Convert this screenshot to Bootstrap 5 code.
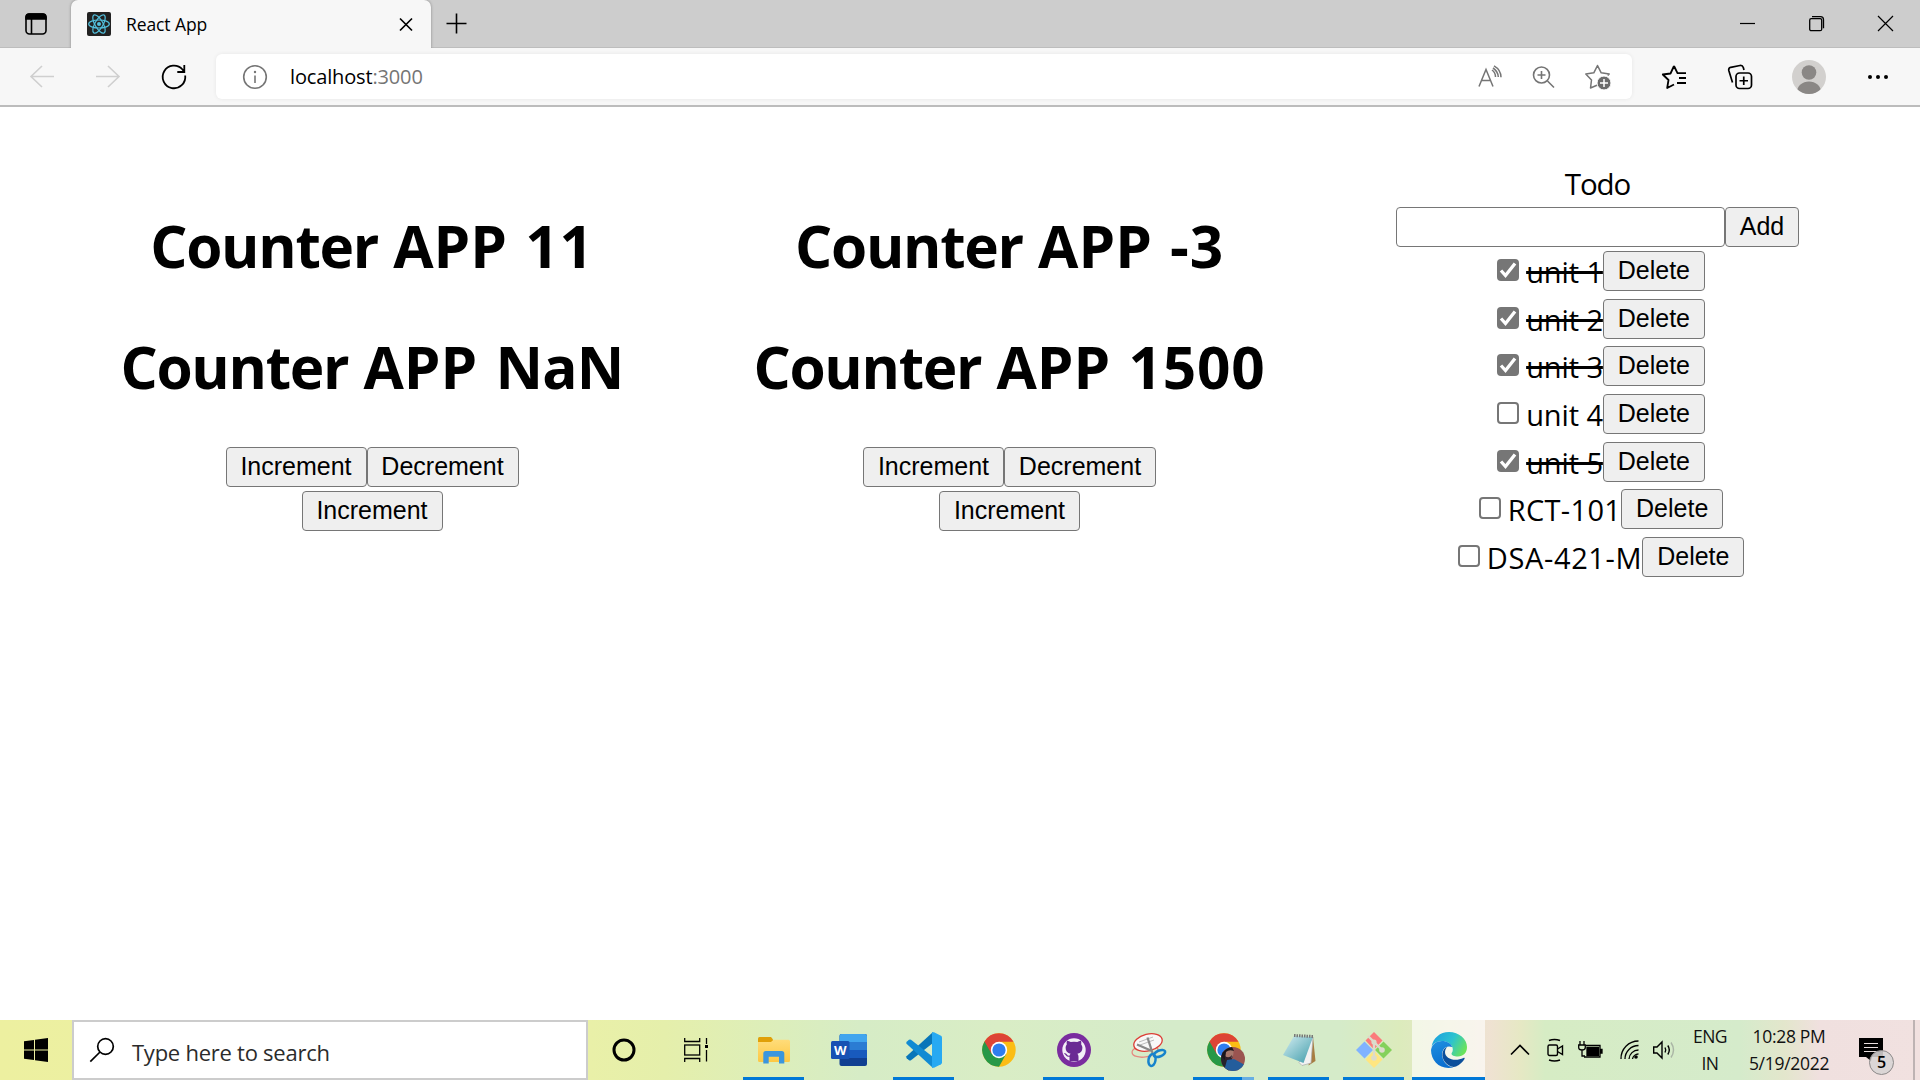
<!DOCTYPE html>
<html lang="en">
<head>
<meta charset="utf-8">
<meta name="viewport" content="width=device-width, initial-scale=1">
<title>React App</title>
<link href="https://cdn.jsdelivr.net/npm/bootstrap@5.3.0/dist/css/bootstrap.min.css" rel="stylesheet">
<style>
body{font-family:"Open Sans","Noto Sans",sans-serif;color:#000;height:1080px;overflow:hidden;background:#fff}
svg{display:block;flex:none;overflow:visible}
svg:not([stroke]){stroke:currentColor;fill:none}
.tabstrip{height:48px;background:#cdcdcd;box-shadow:inset 0 -1px #bdbdbd}
.strip-cell{width:71px}
.browser-tab{width:360px;height:48px;background:#f7f7f7;border-radius:7px 7px 0 0;padding:0 18px 0 16px;box-shadow:0 0 3px rgba(0,0,0,.35);clip-path:inset(0 -4px 0 -4px)}
.tab-title{font-size:17.5px;line-height:24px;letter-spacing:-.1px;margin-left:15px}
.win-cell{width:69px;height:47px}
.toolbar{height:59px;background:#f7f7f7;border-bottom:2px solid #bcbcbc;padding:0 9px}
.tool{width:66px;height:57px}
.tool-off{color:#cfcfcf}
.tool-wide{width:72px}
.address{height:45px;width:1416px;margin:0 9px;background:#fff;border-radius:6px;padding-right:7px;box-shadow:0 0 4px rgba(0,0,0,.07);color:#757575}
.info-cell{width:74px;padding-left:4px}
.url{font-size:20px;line-height:28px;letter-spacing:-.15px}
.url b{font-weight:400;color:#000}
.addr-tool{width:54px}
.viewport-area{height:913px}
.col-a{width:744px}.col-b{width:531px}.col-c{width:645px}
.counter-title{font-size:58.5px;line-height:80px;font-weight:700;margin:0 0 41px;white-space:nowrap}
.label-word{letter-spacing:-1.3px}
.count{margin-left:3px;letter-spacing:.8px}
.count-nan{margin-left:3px;letter-spacing:-.8px}
.col-a,.col-b{padding-top:98px}
.ui-btn{font:25px/36px "Liberation Sans",sans-serif;height:40px;border:1.5px solid #767676;border-radius:4px;background:#efefef;color:#000;padding:0 0 2px;text-align:center}
.w-inc{width:141px}.w-dec{width:152px}.w-del{width:102px}.w-add{width:74px}
.btn-line{margin-bottom:4px}
.col-c{padding-top:56px}
.todo-name{font-size:29.500px;line-height:42px;letter-spacing:-1.1px;margin-bottom:2px}
.todo-input{width:329px;height:40px;border:1.5px solid #767676;border-radius:4px;background:#fff}
.todo-row{height:47.67px}
.tick{width:22px;height:22px;border:2px solid #767676;border-radius:4px;background:#fff;margin:8px 7px 0 7px;flex:none}
.tick-on{background:#767676;border:0}
.item{font-size:29px;line-height:42px;white-space:nowrap;letter-spacing:-.1px}
.item-course{letter-spacing:.3px}
.item-long{letter-spacing:.65px}
.done{text-decoration:line-through;text-decoration-thickness:3px}
.taskbar{height:60px;background:linear-gradient(90deg,#edf0a0 0,#e9f0a8 590px,#e5efab 665px,#dceebb 780px,#d6ecc6 860px,#d9edc5 1000px,#d5ebca 1170px,#d5ebc9 1340px,#dcebbc 1400px,#efe2d2 1490px,#e6e8c4 1520px,#d6ecc4 1545px,#d5ebcb 1740px,#e3e6cc 1785px,#f0e0df 1820px,#f1e1e0 1920px)}
.start{width:72px}
.search{width:516px;height:60px;border:2px solid #ccc;background:#fff;padding-left:16px}
.search span{font-size:22px;line-height:30px;color:#2b2b2b;margin-left:18px;letter-spacing:-.25px;padding-top:3px}
.task{width:73px;height:60px;margin-right:2px}
.task-sys{width:72px;height:60px}
.run::after{content:"";position:absolute;bottom:0;left:6px;right:6px;height:3px;background:#0078d7}
.multi::after{background:linear-gradient(90deg,#0078d7 49px,#67aee3 49px)}
.active-app{background:rgba(255,255,255,.62)}
.active-app::after{left:0;right:0}
.apps{margin-left:5px}
.tray{gap:0 14px}
.tray-icons{margin-left:26px}
.tray-text{font-size:17.500px;line-height:27px;color:#111;text-align:center;white-space:nowrap;letter-spacing:-.5px}
.lang{width:42px}
.clock{width:88px;letter-spacing:-.3px}
.notices{margin-left:12px}
.badge5{position:absolute;left:10px;top:12px;width:25px;height:25px;border-radius:50%;background:rgba(215,212,212,.88);border:1px solid #8c8989;font-size:16px;line-height:23px;font-weight:600;text-align:center}
.peek{width:7px;height:60px;border-left:2px solid #bdb3b3}
</style>
<script src="https://cdn.jsdelivr.net/npm/bootstrap@5.3.0/dist/js/bootstrap.bundle.min.js"></script>
</head>
<body class="d-flex flex-column">
<header>
<div class="tabstrip d-flex">
  <div class="strip-cell d-flex align-items-center justify-content-center">
    <svg width="22" height="22" stroke-width="1.6"><rect x="1" y="1" width="20" height="20" rx="3.5"/><path d="M1 6V4a3 3 0 0 1 3-3h14a3 3 0 0 1 3 3v2z" fill="#000"/><path d="M6.500 6v15"/></svg>
  </div>
  <div class="browser-tab d-flex align-items-center">
    <svg width="24" height="24" viewBox="0 0 24 24" fill="none" stroke="#53c1de" stroke-width="1.200"><rect width="24" height="24" rx="2" fill="#222" stroke="none"/><ellipse cx="12" cy="12" rx="10.300" ry="4"/><ellipse cx="12" cy="12" rx="10.300" ry="4" transform="rotate(60 12 12)"/><ellipse cx="12" cy="12" rx="10.300" ry="4" transform="rotate(120 12 12)"/><circle cx="12" cy="12" r="2" fill="#53c1de" stroke="none"/></svg>
    <span class="tab-title flex-grow-1">React App</span>
    <svg width="14" height="14" stroke-width="1.7"><path d="M1 1.500l12 12M13 1.500l-12 12"/></svg>
  </div>
  <div class="d-flex align-items-center ps-3"><svg width="20" height="20" stroke-width="1.6"><path d="M9.500 -.5v20M-.5 9.500h20"/></svg></div>
  <div class="d-flex ms-auto">
    <div class="win-cell d-flex align-items-center justify-content-center"><svg width="15" height="15" stroke-width="1.200"><path d="M0 7.500h15"/></svg></div>
    <div class="win-cell d-flex align-items-center justify-content-center"><svg width="15" height="15" stroke-width="1.3"><rect x=".7" y="2.700" width="12" height="12" rx="1.500"/><path d="M3 .7h8.500a3 3 0 0 1 3 3v8.500"/></svg></div>
    <div class="win-cell d-flex align-items-center justify-content-center"><svg width="15" height="15" stroke-width="1.200"><path d="M0 0l15 15M15 0l-15 15"/></svg></div>
  </div>
</div>
<div class="toolbar d-flex align-items-center">
  <div class="tool tool-off d-flex align-items-center justify-content-center"><svg width="24" height="22" stroke-width="1.600"><path d="M24 10.500H1M12 0L1 10.500 12 21"/></svg></div>
  <div class="tool tool-off d-flex align-items-center justify-content-center"><svg width="24" height="22" stroke-width="1.600"><path d="M0 10.500h23M12 0l11 10.500L12 21"/></svg></div>
  <div class="tool d-flex align-items-center justify-content-center"><svg width="24" height="24" stroke-width="1.800"><path d="M23.200 10.500A11.300 11.300 0 1 1 20.500 4.500l1.500 2M22.300 0v7h-7"/></svg></div>
  <div class="address d-flex align-items-center">
    <div class="info-cell d-flex align-items-center justify-content-center"><svg width="24" height="24" stroke-width="1.600"><circle cx="12" cy="12" r="11.300"/><path d="M12 10.500v7.500"/><circle cx="12" cy="7" r="1.200" fill="currentColor" stroke="none"/></svg></div>
    <div class="url flex-grow-1"><b>localhost</b>:3000</div>
    <div class="addr-tool d-flex justify-content-center"><svg width="24" height="24" stroke-width="1.500"><path d="M1 21.500L8 4.500l7 17M3.500 15.500h9M14 5q3.500 2.500 3.500 7M16 .8q7 4 7 11.500M15 3q5 3.300 5.300 9"/></svg></div>
    <div class="addr-tool d-flex justify-content-center"><svg width="22" height="22" stroke-width="1.600"><circle cx="8.500" cy="9" r="8"/><path d="M14.500 15l6.500 6.500M8.500 5v8M4.500 9h8"/></svg></div>
    <div class="addr-tool d-flex justify-content-center"><svg width="26" height="26" stroke-width="1.500"><path d="M12.500 21L5.500 24l1-8L.8 10l8-1.200L12.500 1.500l3.700 7.300 8 1.200-1.500 1.500" stroke-linejoin="round"/><circle cx="19" cy="19" r="7" fill="#6b6b6b" stroke="#fff" stroke-width="1"/><path d="M19 15v8M15 19h8" stroke="#fff"/></svg></div>
  </div>
  <div class="tool d-flex align-items-center justify-content-center"><svg width="24" height="24" stroke-width="1.800" stroke-linejoin="round"><path d="M12 1L8.500 8.500.8 9.500l5.700 5.500-1.300 8L12 19.500M12 1l3.500 7.200H24M17 13h7M15 18h9"/></svg></div>
  <div class="tool d-flex align-items-center justify-content-center"><svg width="24" height="24" stroke-width="1.700" stroke-linejoin="round"><rect x="8" y="8" width="15.500" height="15.500" rx="3.500"/><path d="M15.750 11.500v8.500M11.500 15.750h8.500M4.500 17.500L.8 5.500Q.3 3 2.700 2.300L12 .5q2.500-.3 3.300 2l.7 2.500"/></svg></div>
  <div class="tool tool-wide d-flex align-items-center justify-content-center"><svg width="34" height="34" stroke="none"><defs><clipPath id="face"><circle cx="17" cy="17" r="17"/></clipPath></defs><g clip-path="url(#face)"><rect width="34" height="34" fill="#d2d0ce"/><circle cx="17" cy="12.500" r="7.300" fill="#8a8785"/><ellipse cx="17" cy="32" rx="12" ry="10.500" fill="#8a8785"/></g></svg></div>
  <div class="tool d-flex align-items-center justify-content-center"><svg width="20" height="4" fill="#000" stroke="none"><circle cx="2" cy="2" r="2"/><circle cx="10" cy="2" r="2"/><circle cx="18" cy="2" r="2"/></svg></div>
</div>
</header>

<main class="viewport-area d-flex">
  <section class="col-a d-flex flex-column align-items-center">
    <h1 class="counter-title"><span class="label-word">Counter</span> APP <span class="count">11</span></h1>
    <h1 class="counter-title"><span class="label-word">Counter</span> APP <span class="count-nan">NaN</span></h1>
    <div class="btn-line d-flex"><button class="ui-btn w-inc">Increment</button><button class="ui-btn w-dec">Decrement</button></div>
    <button class="ui-btn w-inc">Increment</button>
  </section>
  <section class="col-b d-flex flex-column align-items-center">
    <h1 class="counter-title"><span class="label-word">Counter</span> APP <span class="count">-3</span></h1>
    <h1 class="counter-title"><span class="label-word">Counter</span> APP <span class="count">1500</span></h1>
    <div class="btn-line d-flex"><button class="ui-btn w-inc">Increment</button><button class="ui-btn w-dec">Decrement</button></div>
    <button class="ui-btn w-inc">Increment</button>
  </section>
  <section class="col-c d-flex flex-column align-items-center">
    <div class="todo-name">Todo</div>
    <div class="btn-line d-flex"><input class="todo-input" type="text" aria-label="Todo"><button class="ui-btn w-add">Add</button></div>
    <div class="todo-row d-flex"><span class="tick tick-on"><svg width="22" height="22" fill="none" stroke="#fff" stroke-width="3.300"><path d="M4 11.500l4.500 5L18 4.500"/></svg></span><span class="item done">unit 1</span><button class="ui-btn w-del">Delete</button></div>
    <div class="todo-row d-flex"><span class="tick tick-on"><svg width="22" height="22" fill="none" stroke="#fff" stroke-width="3.300"><path d="M4 11.500l4.500 5L18 4.500"/></svg></span><span class="item done">unit 2</span><button class="ui-btn w-del">Delete</button></div>
    <div class="todo-row d-flex"><span class="tick tick-on"><svg width="22" height="22" fill="none" stroke="#fff" stroke-width="3.300"><path d="M4 11.500l4.500 5L18 4.500"/></svg></span><span class="item done">unit 3</span><button class="ui-btn w-del">Delete</button></div>
    <div class="todo-row d-flex"><span class="tick"></span><span class="item">unit 4</span><button class="ui-btn w-del">Delete</button></div>
    <div class="todo-row d-flex"><span class="tick tick-on"><svg width="22" height="22" fill="none" stroke="#fff" stroke-width="3.300"><path d="M4 11.500l4.500 5L18 4.500"/></svg></span><span class="item done">unit 5</span><button class="ui-btn w-del">Delete</button></div>
    <div class="todo-row d-flex"><span class="tick"></span><span class="item item-course">RCT-101</span><button class="ui-btn w-del">Delete</button></div>
    <div class="todo-row d-flex"><span class="tick"></span><span class="item item-long">DSA-421-M</span><button class="ui-btn w-del">Delete</button></div>
  </section>
</main>

<footer class="taskbar d-flex">
  <div class="start d-flex align-items-center justify-content-center"><svg width="24" height="24" fill="#000" stroke="none"><path d="M0 3.300L10 2v9.500H0zM11 1.800L24 0v11.500H11zM0 12.500h10V22L0 20.700zM11 12.500h13V24l-13-1.800z"/></svg></div>
  <div class="search d-flex align-items-center"><svg width="24" height="24" stroke-width="1.700"><circle cx="15.500" cy="8.500" r="7.800"/><path d="M10 14L.3 23.700"/></svg><span>Type here to search</span></div>
  <div class="task-sys d-flex align-items-center justify-content-center"><svg width="24" height="24" stroke-width="3"><circle cx="12" cy="12" r="10"/></svg></div>
  <div class="task-sys d-flex align-items-center justify-content-center"><svg width="24" height="24" stroke-width="1.300"><path d="M.7 0v3.500h15V0M.7 24v-3.500h15V24M22.500 0v6M22.500 12v11.500"/><rect x=".7" y="7" width="15" height="10"/><rect x="21" y="7" width="3" height="3" fill="#000" stroke="none"/></svg></div>
  <div class="apps d-flex">
    <div class="task run position-relative d-flex align-items-center justify-content-center"><svg width="32" height="27" stroke="none"><defs><linearGradient id="fold" x2="0" y2="1"><stop stop-color="#ffdc7a"/><stop offset="1" stop-color="#fdc843"/></linearGradient></defs><path d="M0 1.500Q0 0 1.500 0H13l2 2.500V6H0z" fill="#e0a008"/><path d="M0 5h13l2.500-2.300H30.500q1.500 0 1.500 1.500V23.500q0 1.500-1.500 1.500h-29Q0 25 0 23.500z" fill="url(#fold)"/><path d="M5.300 26.500V16.500q0-2.500 2.500-2.500h16q2.500 0 2.500 2.500v10H21v-6.700H10.700v6.700z" fill="#3b96dd"/></svg></div>
    <div class="task position-relative d-flex align-items-center justify-content-center"><svg width="36" height="32" stroke="none"><rect x="8.500" width="27.500" height="32" rx="2" fill="#103f91"/><path d="M8.500 8V2q0-2 2-2H34q2 0 2 2v6z" fill="#41a5ee"/><path d="M8.500 8H36v8H8.500z" fill="#2b7cd3"/><path d="M8.500 16H36v8H8.500z" fill="#185abd"/><rect y="7" width="18.500" height="18" rx="1.500" fill="#1751b3"/><text x="9.200" y="20.700" font-family="Open Sans" font-size="13" font-weight="700" fill="#fff" text-anchor="middle">W</text></svg></div>
    <div class="task run position-relative d-flex align-items-center justify-content-center"><svg width="36" height="36" viewBox="0 0 36 36" stroke="none"><path d="M27 0L.5 24.300q-.6 1 .2 2l2.300 2q1 .6 2 0L27 11z" fill="#0876b9"/><path d="M27 36L.5 11.700q-.6-1 .2-2l2.300-2q1-.6 2 0L27 25z" fill="#118bd3"/><path d="M26 .6Q26.500 0 28 .3L35 3.700q1 .5 1 1.700v25.200q0 1.200-1 1.700l-7 3.400Q26.500 36 26 35.400z" fill="#27a9f2"/></svg></div>
    <div class="task position-relative d-flex align-items-center justify-content-center"><svg width="34" height="34" viewBox="0 0 34 34" stroke="none"><g id="chrome"><circle cx="17" cy="17" r="16.700" fill="#fbbd14"/><path d="M17 33.700A16.700 16.700 0 0 1 2.500 8.600L10 13l14 8.200z" fill="#279847"/><path d="M2.500 8.600A16.700 16.700 0 0 1 31.500 8.800H17L9.700 21z" fill="#dd4436"/><circle cx="17" cy="17" r="8.200" fill="#fff"/><circle cx="17" cy="17" r="6.600" fill="#2f7def"/></g></svg></div>
    <div class="task run position-relative d-flex align-items-center justify-content-center"><svg width="34" height="34" viewBox="0 0 34 34" stroke="none"><circle cx="17" cy="17" r="17" fill="#7a2c9f"/><circle cx="17" cy="17" r="11.700" fill="#f3eef7"/><path d="M12.500 28.200v-4.500q-2.500.4-3.500-1.200t-2.300-2q2-.8 3.200 1t2.700 1.100q.3-1.300 1-1.800-5-1-5-6 0-2 1.200-3.400-.5-1.800.3-3.600 2 .1 3.600 1.300 3.300-.8 6.600 0 1.600-1.200 3.600-1.300.7 1.800.3 3.600 1.200 1.400 1.200 3.400 0 5-5 6 1.100 1 1.100 3v4.400z" fill="#6a2a94"/></svg></div>
    <div class="task position-relative d-flex align-items-center justify-content-center"><svg width="34" height="34" fill="none" stroke="#888" stroke-width="1.300"><ellipse cx="13" cy="18" rx="13" ry="6" stroke="#e58a80" transform="rotate(-8 13 18)"/><ellipse cx="16" cy="9.500" rx="14.500" ry="8.300" stroke="#dc3c35" fill="#f8f8f8" transform="rotate(-14 16 9.500)"/><path d="M7 9l14-5M8 12l14-5" stroke="#bbb" stroke-width="1"/><path d="M5 11.500L20 18M15.500 4.500L20.500 20" stroke-width="2.300"/><ellipse cx="27.500" cy="20.500" rx="6" ry="3" stroke="#1683cc" stroke-width="2.500" transform="rotate(-22 27.500 20.500)"/><ellipse cx="20" cy="27" rx="3.500" ry="6" stroke="#1683cc" stroke-width="2.500" transform="rotate(10 20 27)"/></svg></div>
    <div class="task run multi position-relative d-flex align-items-center justify-content-center"><svg width="34" height="34" viewBox="0 0 34 34" stroke="none"><defs><clipPath id="pic"><circle cx="26" cy="26" r="12"/></clipPath></defs><use href="#chrome"/><g clip-path="url(#pic)"><rect x="14" y="14" width="24" height="24" fill="#9a5450"/><path d="M14 14h9l3 8-4 16h-8z" fill="#26222b"/><ellipse cx="21.500" cy="20" rx="5" ry="6.500" fill="#a8786c"/><path d="M15 14h10l2 4q-5-2-8 1l-1 8-4-4z" fill="#1b161c"/><path d="M18 23q4 3 7-1l-1 5q-3 2-6 0z" fill="#30202a"/><path d="M17 38l3-11 7-1 11 6v6z" fill="#245d9c"/></g></svg></div>
    <div class="task run position-relative d-flex align-items-center justify-content-center"><svg width="34" height="32" stroke="none"><defs><linearGradient id="pad" x2="1" y2="1"><stop stop-color="#d5eef2"/><stop offset="1" stop-color="#3f9caa"/></linearGradient></defs><path d="M31 3l2.500 24-7 4.500z" fill="#a77d42"/><path d="M31 3L29 29l-9 2.500-3-3z" fill="#f2f2f2" stroke="#aaa" stroke-width=".7"/><path d="M12 2l19 1-9.500 26L1 21z" fill="url(#pad)"/><path d="M12 1.500l19 1" stroke="#777" stroke-width="3" stroke-dasharray="1.500 1"/></svg></div>
    <div class="task run position-relative d-flex align-items-center justify-content-center"><svg width="36" height="36" viewBox="0 0 36 36" stroke="none"><path d="M18 0l8.500 8.500-8.500 9-8.500-9z" fill="#fb7b7b"/><path d="M27.500 9.500L36 18l-8.500 8.500-8.500-8.500z" fill="#84d15b"/><path d="M8.500 9.500L17 18l-8.500 8.500L0 18z" fill="#80b3ff"/><path d="M18 18.500l8.500 9L18 36l-8.500-8.500z" fill="#ffe680"/><path d="M12 4l6 6v16M18 10l8 8" fill="none" stroke="#dcdccb" stroke-width="2.400"/><circle cx="18" cy="10" r="2.600" fill="#dcdccb"/><circle cx="26" cy="18" r="2.800" fill="#dcdccb"/><circle cx="18" cy="26" r="2.800" fill="#dcdccb"/></svg></div>
    <div class="task run active-app position-relative d-flex align-items-center justify-content-center me-0"><svg width="36" height="36" viewBox="0 0 36 36" stroke="none"><defs><linearGradient id="eg1" x1="0" y1=".2" x2="1" y2=".6"><stop stop-color="#1ba0e0"/><stop offset=".55" stop-color="#2cc3cf"/><stop offset="1" stop-color="#6be35a"/></linearGradient><linearGradient id="eg2" x2=".3" y2="1"><stop stop-color="#1f8fe0"/><stop offset="1" stop-color="#0a6fd0"/></linearGradient></defs><path d="M.5 15C2 6 9 0 18 0c10 0 18 7 18 15 0 6-4 9.500-9 9.500-4 0-6.500-1.500-6.500-2.800 0-1 1.300-1.500 1.300-4.200C21.800 13 17 9 11 9 6 9 2 11.500.5 15z" fill="url(#eg1)"/><path d="M0 18C1 12 5.500 9 11 9c5 0 9 2.500 10.300 6-7-2.500-11 3-10 9.500C12.500 31 17 34.500 22.500 35.300 10 38.500 0 29.500 0 18z" fill="url(#eg2)"/><path d="M16.500 14.800C10.500 17 10 25 14 30c3 4 7.500 5.700 11 4.500 4-1.700 7-5 8.500-7.500.5-1-.3-1.500-1-1C24 30 14 27 14 20c0-2.500 1.500-4.500 2.500-5.200z" fill="#0c4f9b"/></svg></div>
  </div>
  <div class="tray d-flex align-items-center flex-grow-1">
    <svg class="tray-icons" width="18" height="10" stroke-width="1.600"><path d="M0 9.500l9-9 9 9"/></svg>
    <svg class="ms-1" width="17" height="22" stroke-width="1.400"><rect x="1" y="6" width="9.500" height="10.500" rx="1.500"/><path d="M10.500 10l5-3v8.500l-5-3M2 1.500q5.500-2 11 0M2 21q5.500 2 11 0"/></svg>
    <svg width="24" height="18" stroke-width="1.300"><path d="M8 4.500h14v11.500H6M22.700 8.500v3.500h1.300V8.500z"/><rect x="9" y="6.500" width="11.500" height="8" fill="#000"/><path d="M2 0v4M6 0v4M.7 4h6.600v2.500q0 2.500-3.300 2.500T.7 6.500zM4 9v6h3"/></svg>
    <svg class="ms-1" width="19" height="20" stroke-width="1.300"><path d="M1 19A17.500 17.500 0 0 1 18.500 1M5 19A13.500 13.500 0 0 1 18.500 5.500M9 19a9.500 9.500 0 0 1 9.500-9"/><circle cx="16" cy="17" r="1.800" fill="#000" stroke="none"/><path d="M12.500 19a6 6 0 0 1 6-5"/></svg>
    <svg width="22" height="18" stroke-width="1.400"><path d="M.7 6H4l5-5v16l-5-5H.7zM12 6.500q1.500 2.500 0 5M14.800 4.500q3 4.500 0 9"/><path d="M18 1.500q5 7.500 0 15" stroke="#aab5a5"/></svg>
    <div class="tray-text lang">ENG<br>IN</div>
    <div class="tray-text clock">10:28 PM<br>5/19/2022</div>
    <div class="notices position-relative"><svg width="24" height="24" stroke="none"><path d="M0 0h24v19H13l-1 4-5-4H0z" fill="#000"/><path d="M5 5.500h14M5 9.500h14M5 13.500h14" stroke="#e8dede" stroke-width="1.200"/></svg><span class="badge5">5</span></div>
    <div class="peek ms-auto"></div>
  </div>
</footer>
</body>
</html>
